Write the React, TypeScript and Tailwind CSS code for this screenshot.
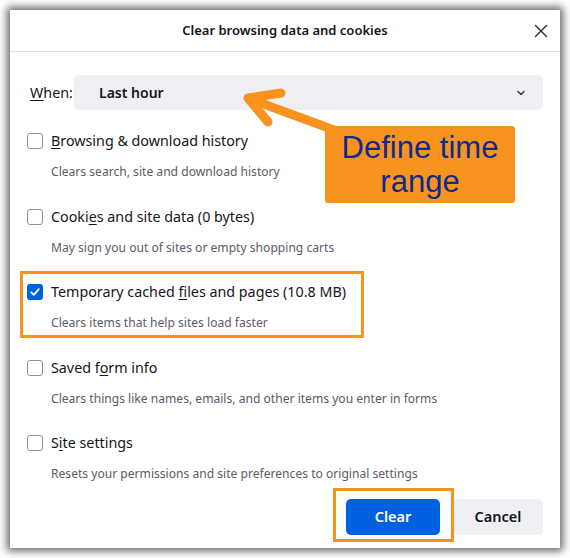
import React from 'react';

const font = { fontFamily: '"Noto Sans", "Open Sans", sans-serif' };

type Item = {
  pre: string;
  key: string;
  post: string;
  desc: string;
  checked?: boolean;
};

const items: Item[] = [
  { pre: '', key: 'B', post: 'rowsing & download history', desc: 'Clears search, site and download history' },
  { pre: 'Cooki', key: 'e', post: 's and site data (0 bytes)', desc: 'May sign you out of sites or empty shopping carts' },
  { pre: 'Temporary cached ', key: 'f', post: 'iles and pages (10.8 MB)', desc: 'Clears items that help sites load faster', checked: true },
  { pre: 'Saved f', key: 'o', post: 'rm info', desc: 'Clears things like names, emails, and other items you enter in forms' },
  { pre: 'S', key: 'i', post: 'te settings', desc: 'Resets your permissions and site preferences to original settings' },
];

const Checkbox = ({ checked }: { checked?: boolean }) =>
  checked ? (
    <span className="flex h-4 w-4 shrink-0 items-center justify-center rounded-[3px] bg-[#0061e0]">
      <svg width="12" height="12" viewBox="0 0 12 12" fill="none">
        <path d="M2.2 6.3 L4.8 8.8 L9.8 3.2" stroke="white" strokeWidth="1.8" strokeLinecap="round" strokeLinejoin="round" />
      </svg>
    </span>
  ) : (
    <span className="h-4 w-4 shrink-0 rounded-[3px] border border-[#8f8f9d] bg-white" />
  );

export default function App() {
  return (
    <div className="relative h-[558px] w-[570px] bg-white p-[10px] text-[#15141a]" style={font}>
      {/* dialog */}
      <div className="flex h-[538px] w-[550px] flex-col bg-white shadow-[0_0_8px_3px_rgba(0,0,0,0.6)]">
        <div className="relative flex h-[42px] shrink-0 items-center justify-center border-b border-[#e0e0e6]">
          <span className="text-[13px] font-semibold">Clear browsing data and cookies</span>
          <svg className="absolute right-[12px] top-[14px]" width="14" height="14" viewBox="0 0 14 14">
            <path d="M1.5 1.5 L12.5 12.5 M12.5 1.5 L1.5 12.5" stroke="#2b2a33" strokeWidth="1.4" strokeLinecap="round" />
          </svg>
        </div>

        <div className="flex flex-1 flex-col px-[17px] pt-[23px]">
          <div className="flex items-center">
            <span className="w-[47px] pl-[3px] text-[14.3px]">
              <span className="underline underline-offset-2">W</span>hen:
            </span>
            <div className="flex h-[35px] flex-1 items-center justify-between rounded-[5px] bg-[#f0f0f4] pl-[25px] pr-[17px]">
              <span className="text-[14px] font-semibold">Last hour</span>
              <svg width="10" height="10" viewBox="0 0 10 10">
                <path d="M2 3.5 L5 6.5 L8 3.5" stroke="#2b2a33" strokeWidth="1.3" fill="none" strokeLinecap="round" strokeLinejoin="round" />
              </svg>
            </div>
          </div>

          <div className="mt-[19px] flex flex-col gap-[23.5px]">
            {items.map((it) => (
              <div key={it.desc} className="flex h-[52px] flex-col">
                <div className="flex h-[24px] items-center gap-[8px]">
                  <Checkbox checked={it.checked} />
                  <span className="text-[14.3px]">
                    {it.pre}
                    <span className="underline underline-offset-2">{it.key}</span>
                    {it.post}
                  </span>
                </div>
                <div className="mt-[10px] pl-[24px] text-[12.1px] leading-[18px] text-[#5b5b66]">{it.desc}</div>
              </div>
            ))}
          </div>

          <div className="mt-[16px] flex justify-end gap-[13px]">
            <button className="h-[36px] w-[94px] rounded-[5px] bg-[#0061e0] text-[14.5px] font-semibold text-white">Clear</button>
            <button className="h-[36px] w-[90px] rounded-[5px] bg-[#f0f0f4] text-[14.5px] font-semibold">Cancel</button>
          </div>
        </div>
      </div>

      {/* annotations */}
      <div className="absolute left-[20px] top-[271px] h-[67px] w-[344px] border-[3px] border-[#f7931e]" />
      <div className="absolute left-[333px] top-[488px] h-[54px] w-[121px] border-[3px] border-[#f7931e]" />

      <svg className="absolute left-0 top-0" width="570" height="558" viewBox="0 0 570 558">
        <path d="M345 134 L250 99" stroke="#f7931e" strokeWidth="9" strokeLinecap="round" />
        <path d="M281 93 L248 98 L268 122" stroke="#f7931e" strokeWidth="9" fill="none" strokeLinecap="round" strokeLinejoin="round" />
      </svg>

      <div
        className="absolute left-[325px] top-[126px] flex h-[77px] w-[190px] flex-col items-center justify-center rounded-[3px] bg-[#f7931e] text-[31px] leading-[34px] text-[#0d2b8c]"
        style={{ fontFamily: '"Liberation Sans", Arial, sans-serif' }}
      >
        <span>Define time</span>
        <span>range</span>
      </div>
    </div>
  );
}
